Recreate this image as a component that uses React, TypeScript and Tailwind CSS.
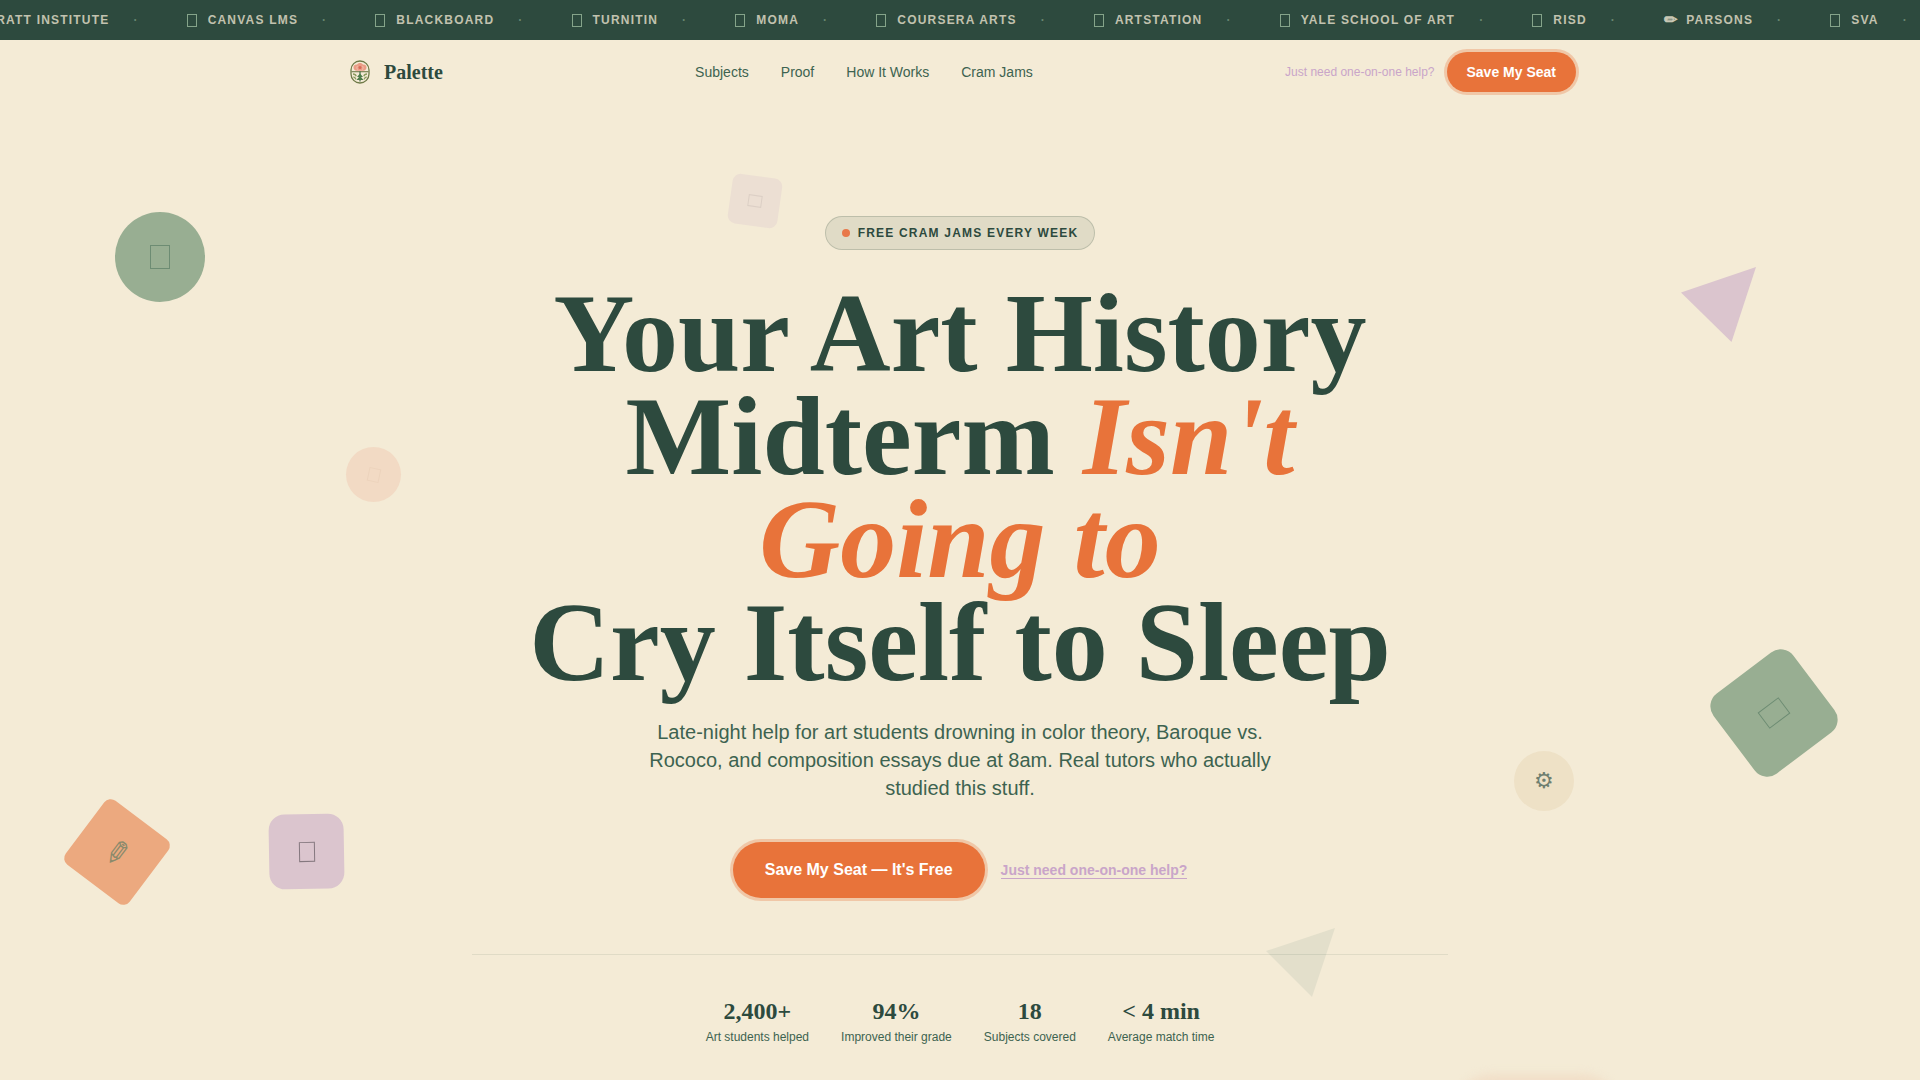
import React from "react";

const SERIF = "font-['Liberation_Serif',serif]";

const tickerItems = [
  { name: "Pratt Institute" },
  { name: "Canvas LMS" },
  { name: "Blackboard" },
  { name: "Turnitin" },
  { name: "MoMA" },
  { name: "Coursera Arts" },
  { name: "ArtStation" },
  { name: "Yale School of Art" },
  { name: "RISD" },
  { name: "Parsons", glyph: "✏" },
  { name: "SVA" },
];

const navLinks = ["Subjects", "Proof", "How It Works", "Cram Jams"];

const stats = [
  { value: "2,400+", label: "Art students helped" },
  { value: "94%", label: "Improved their grade" },
  { value: "18", label: "Subjects covered" },
  { value: "< 4 min", label: "Average match time" },
];

function Ticker() {
  return (
    <div className="h-10 overflow-hidden bg-[#2d4a3e]">
      <ul className="-ml-[58px] flex h-full w-max items-center text-xs font-bold uppercase tracking-widest text-[#f4ebd6]/75">
        {tickerItems.map((item) => (
          <li key={item.name} className="flex items-center">
            <span className="mx-6 flex items-center gap-2">
              {item.glyph ? (
                <span className="text-base leading-none text-[#f4ebd6]/80">{item.glyph}</span>
              ) : (
                <span className="flex w-[13px]">
                  <span className="h-[13px] w-[10px] border border-[#8fae92]/90" />
                </span>
              )}
              {item.name}
            </span>
            <span className="mr-6 text-[#8fae92]/60">·</span>
          </li>
        ))}
      </ul>
    </div>
  );
}

function Logo() {
  return (
    <svg viewBox="0 0 32 32" className="size-8" fill="none" aria-hidden="true">
      <rect x="7" y="5" width="18" height="22" rx="9" stroke="#6f7a48" strokeWidth="1.3" />
      <path d="M7.5 15.7h17" stroke="#6f7a48" strokeWidth="1.1" />
      <path
        d="M9.500 11.500c0-2.200 1.800-3.200 3.400-2.800.6-1.200 1.800-1.700 3.100-1.700s2.500.5 3.100 1.700c1.600-.4 3.400.6 3.400 2.800s-1.600 3.400-3.600 3.200h-5.800c-2 .2-3.600-1-3.600-3.200z"
        fill="#ea9c86"
      />
      <path
        d="M13.500 9.800c-.8 1.600-.8 2.600 0 4M18.500 9.800c.8 1.600.8 2.600 0 4"
        stroke="#f4d8c4"
        strokeWidth=".6"
      />
      <circle cx="16" cy="11.400" r="1.500" fill="#d66a58" />
      <path d="M16 15.500v10" stroke="#3f6b45" strokeWidth="1.200" />
      <path d="M16 17.500l3 3.500h-2l2.500 3h-7l2.500-3h-2z" fill="#4f7d4a" />
      <path
        d="M9 18c1.600 0 2.800.8 3.200 2.200M23 18c-1.600 0-2.800.8-3.200 2.200M9.300 20.800c1.200.2 2.200 1 2.600 2.600M22.700 20.800c-1.200.2-2.200 1-2.600 2.600"
        stroke="#8a9a5c"
        strokeWidth="1.300"
      />
    </svg>
  );
}

function Nav() {
  return (
    <header className="mx-auto flex h-16 w-full max-w-7xl items-center justify-between px-6">
      <a href="#top" className="flex items-center gap-2">
        <Logo />
        <span className={`${SERIF} text-xl font-bold text-[#2d4a3e]`}>Palette</span>
      </a>
      <nav className="flex items-center gap-8 text-sm text-[#3d6350]">
        {navLinks.map((label) => (
          <a key={label} href="#sections">
            {label}
          </a>
        ))}
      </nav>
      <div className="flex items-center gap-3">
        <a href="#tutoring" className="text-xs text-[#c9a5c9]">
          Just need one-on-one help?
        </a>
        <button
          type="button"
          className="h-10 rounded-full bg-[#e8733a] px-5 text-sm font-bold text-white ring-3 ring-[#e8733a]/30"
        >
          Save My Seat
        </button>
      </div>
    </header>
  );
}

function FloatingShapes() {
  return (
    <div className="pointer-events-none absolute inset-0 overflow-hidden" aria-hidden="true">
      <div className="absolute left-[115px] top-[108px] flex size-[90px] items-center justify-center rounded-full bg-[#98ae92]">
        <span className="h-6 w-5 border border-[#6d8c73]" />
      </div>
      <div className="absolute left-[346px] top-[343px] flex size-[55px] items-center justify-center rounded-full bg-[#f2dac4]">
        <span className="h-[14px] w-3 rotate-12 border border-[#ecd3bc]" />
      </div>
      <div className="absolute left-[730px] top-[72px] flex size-[50px] rotate-8 items-center justify-center rounded-lg bg-[#ecdfd3]">
        <span className="h-3 w-[14px] border border-[#dccfc5]" />
      </div>
      <div className="absolute left-[77px] top-[708px] flex size-20 rotate-[127deg] items-center justify-center rounded-lg bg-[#eca97f] text-[32px] leading-none text-[#8a8a6c]">
        ✏
      </div>
      <div className="absolute left-[269px] top-[710px] flex size-[75px] -rotate-1 items-center justify-center rounded-2xl bg-[#dbc5ce]">
        <span className="h-5 w-4 border border-[#85787f]" />
      </div>
      <div className="absolute right-[96px] top-[559px] flex size-[100px] rotate-[53deg] items-center justify-center rounded-2xl bg-[#98ae92]">
        <span className="h-[26px] w-5 border border-[#6d8c73]" />
      </div>
      <div className="absolute right-[346px] top-[647px] flex size-[60px] items-center justify-center rounded-full bg-[#eee1c6] text-[22px] leading-6 text-[#6f7f70]">
        ⚙
      </div>
      <svg viewBox="0 0 75 75" className="absolute right-[164px] top-[163px] w-[75px]">
        <path d="M0 25.500L75 0 50.500 75z" fill="#dbc5ce" />
      </svg>
      <svg viewBox="0 0 69 69" className="absolute right-[585px] top-[824px] w-[69px]">
        <path d="M0 23L69 0 46 69z" fill="#e3dfcb" />
      </svg>
      <div className="absolute right-[298px] top-[970px] h-20 w-[170px] rounded-full bg-[#f1dfc8] blur-xs" />
    </div>
  );
}

function Hero() {
  return (
    <section className="relative flex-1">
      <FloatingShapes />
      <div className="relative mx-auto flex max-w-5xl flex-col items-center px-6 pt-28 text-center">
        <p className="mb-8 flex items-center gap-2 rounded-full border border-[#2d4a3e]/20 bg-[#2d4a3e]/10 px-4 py-2 text-xs font-bold uppercase tracking-widest text-[#2d4a3e]">
          <span className="size-2 rounded-full bg-[#e8784a]" />
          Free Cram Jams Every Week
        </p>
        <h1 className={`${SERIF} mb-6 max-w-4xl text-[112px] leading-[103px] font-bold text-[#2d4a3e]`}>
          Your Art History Midterm <em className="text-[#e8733a]">Isn't Going to</em>
          <br />
          Cry Itself to Sleep
        </h1>
        <p className="mb-10 max-w-[640px] text-xl leading-7 text-[#3d6350]">
          Late-night help for art students drowning in color theory, Baroque vs. Rococo, and composition essays due at
          8am. Real tutors who actually studied this stuff.
        </p>
        <div className="mb-14 flex items-center gap-4">
          <button
            type="button"
            className="h-14 rounded-full bg-[#e8733a] px-8 text-base font-bold text-white ring-3 ring-[#e8733a]/30"
          >
            Save My Seat — It's Free
          </button>
          <a href="#tutoring" className="border-b border-[#c9a5c9] text-sm leading-4 font-bold text-[#c9a5c9]">
            Just need one-on-one help?
          </a>
        </div>
        <dl className="flex w-full justify-center gap-8 border-t border-[#2d4a3e]/10 pt-10 pb-10">
          {stats.map((stat) => (
            <div key={stat.label} className="flex flex-col-reverse gap-0.5">
              <dt className="text-xs text-[#3d6350]">{stat.label}</dt>
              <dd className={`${SERIF} text-2xl font-bold text-[#2d4a3e]`}>{stat.value}</dd>
            </div>
          ))}
        </dl>
      </div>
    </section>
  );
}

export default function App() {
  return (
    <div
      id="top"
      className="flex min-h-screen flex-col overflow-hidden bg-[#f4ebd6] font-['Liberation_Sans',Arial,sans-serif]"
    >
      <Ticker />
      <Nav />
      <Hero />
    </div>
  );
}
